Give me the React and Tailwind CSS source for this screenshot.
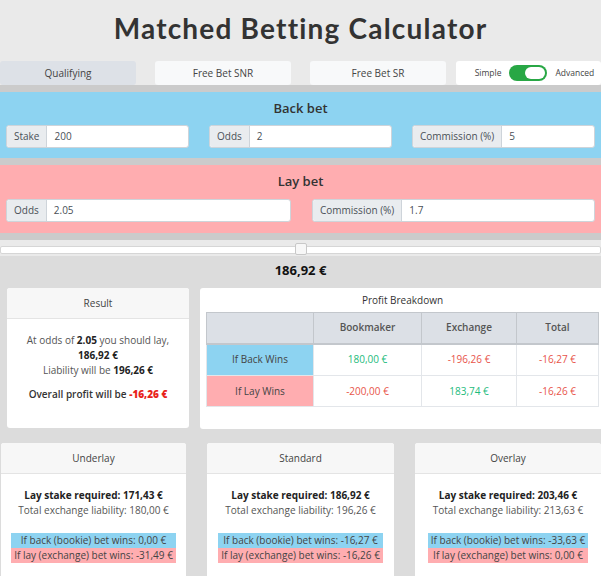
import { useState } from 'react';

const body = { fontFamily: '"Open Sans", "Noto Sans", sans-serif' };

function InputGroup({ label, value, className }) {
  return (
    <div className={`flex h-[23px] rounded-[3px] border border-[#ced4da] bg-white text-[10px] ${className}`}>
      <div className="flex items-center bg-[#e9ecef] px-[7px] text-[#495057] border-r border-[#ced4da] rounded-l-[3px]">{label}</div>
      <div className="flex items-center px-[7px] text-[#495057]">{value}</div>
    </div>
  );
}

function Card({ title, className, children }) {
  return (
    <div className={`bg-white rounded-[3px] flex flex-col ${className}`}>
      <div className="h-[31px] flex items-center justify-center bg-[#f7f7f7] border-b border-[#e4e4e4] rounded-t-[3px] text-[10px] text-[#444]">{title}</div>
      {children}
    </div>
  );
}

function Scenario({ title, stake, liability, back, lay, className }) {
  return (
    <Card title={title} className={`h-[140px] ${className}`}>
      <div className="flex flex-col items-center pt-[14px] text-[10px]">
        <div className="font-bold text-[#222] leading-[15px]">Lay stake required: {stake}</div>
        <div className="text-[#555] leading-[15px]">Total exchange liability: {liability}</div>
        <div className="mt-[15px] flex flex-col items-stretch text-[#444]">
          <div className="bg-[#8dd3f1] px-[3px] leading-[15px] text-center">If back (bookie) bet wins: {back}</div>
          <div className="bg-[#ffadb0] px-[3px] leading-[15px] text-center">If lay (exchange) bet wins: {lay}</div>
        </div>
      </div>
    </Card>
  );
}

export default function App() {
  const [advanced, setAdvanced] = useState(true);
  const green = 'text-[#1dbb7c]';
  const red = 'text-[#e8544a]';

  return (
    <div className="w-[601px] h-[576px] overflow-hidden bg-[#dcdcdc]" style={body}>
      {/* Header */}
      <div className="bg-[#eaeaea] h-[61px] flex items-center justify-center">
        <h1 className="text-[28px] font-bold text-[#333] tracking-[1.2px] mt-[-6px]" style={{ fontFamily: 'Lato, "Open Sans", sans-serif' }}>
          Matched Betting Calculator
        </h1>
      </div>

      {/* Tabs */}
      <div className="bg-[#eaeaea] h-[24px] flex text-[10px] text-[#444]">
        <div className="w-[136px] bg-[#dde1e7] rounded-[3px] flex items-center justify-center">Qualifying</div>
        <div className="w-[136px] ml-[19px] bg-[#f8f9fa] rounded-[3px] flex items-center justify-center">Free Bet SNR</div>
        <div className="w-[136px] ml-[19px] bg-[#f8f9fa] rounded-[3px] flex items-center justify-center">Free Bet SR</div>
        <div className="flex-1 ml-[10px] pl-[12px] bg-white rounded-[3px] flex items-center justify-center gap-[8px] text-[8.5px]">
          <span>Simple</span>
          <button
            onClick={() => setAdvanced(!advanced)}
            className={`w-[38px] h-[16px] rounded-full flex items-center px-[2px] ${advanced ? 'bg-[#28a745] justify-end' : 'bg-[#ccc] justify-start'}`}
          >
            <span className="w-[20px] h-[12px] rounded-full bg-white" />
          </button>
          <span>Advanced</span>
        </div>
      </div>

      <div className="h-[7px] bg-[#cbcbcb]" />

      {/* Back bet */}
      <div className="bg-[#8dd3f1] h-[66px] px-[6px]">
        <div className="h-[33px] flex items-center justify-center text-[13px] font-semibold text-[#333]">Back bet</div>
        <div className="flex justify-between">
          <InputGroup label="Stake" value="200" className="w-[183px]" />
          <InputGroup label="Odds" value="2" className="w-[183px]" />
          <InputGroup label="Commission (%)" value="5" className="w-[183px]" />
        </div>
      </div>

      <div className="h-[7px] bg-[#cbcbcb]" />

      {/* Lay bet */}
      <div className="bg-[#ffadb0] h-[68px] px-[6px]">
        <div className="h-[34px] flex items-center justify-center text-[13px] font-semibold text-[#333]">Lay bet</div>
        <div className="flex justify-between">
          <InputGroup label="Odds" value="2.05" className="w-[285px]" />
          <InputGroup label="Commission (%)" value="1.7" className="w-[283px]" />
        </div>
      </div>

      <div className="h-[7px] bg-[#cbcbcb]" />

      {/* Slider */}
      <div className="bg-[#eaeaea] h-[16px] relative">
        <div className="absolute left-0 right-0 top-[6px] h-[8px] bg-white border border-[#d6d6d6] rounded-[2px]" />
        <div className="absolute left-[295px] top-[3px] w-[12px] h-[12px] bg-[#f7f7f7] border border-[#c8c8c8] rounded-[2px]" />
      </div>

      <div className="h-[30px] flex items-center justify-center text-[13px] font-bold text-[#111]">186,92 €</div>

      {/* Result + breakdown */}
      <div className="flex pl-[7px] mt-[2px]">
        <Card title="Result" className="w-[182px] h-[140px]">
          <div className="flex flex-col items-center pt-[14px] text-[10px] text-[#555] leading-[15px]">
            <div>At odds of <b className="text-[#222]">2.05</b> you should lay,</div>
            <div className="font-bold text-[#222]">186,92 €</div>
            <div>Liability will be <b className="text-[#222]">196,26 €</b></div>
            <div className="mt-[9px] font-semibold text-[#333]">Overall profit will be <b className="text-[#e8231b]">-16,26 €</b></div>
          </div>
        </Card>
        <div className="ml-[11px] flex-1 h-[141px] bg-white rounded-l-[3px] pl-[6px] pr-[2px]">
          <div className="h-[24px] flex items-center justify-center text-[10px] text-[#333]">Profit Breakdown</div>
          <table className="w-full border-collapse text-[10px] text-center">
            <thead>
              <tr className="h-[31px] bg-[#dce0e6] text-[#555]">
                <th className="w-[107px] border border-[#c3c7cc] border-b-2"></th>
                <th className="w-[108px] border border-[#c3c7cc] border-b-2 font-semibold">Bookmaker</th>
                <th className="w-[95px] border border-[#c3c7cc] border-b-2 font-semibold">Exchange</th>
                <th className="border border-[#c3c7cc] border-b-2 font-semibold">Total</th>
              </tr>
            </thead>
            <tbody>
              <tr className="h-[32px]">
                <td className="bg-[#8dd3f1] text-[#444] border border-[#e3e6ea]">If Back Wins</td>
                <td className={`${green} border border-[#e3e6ea]`}>180,00 €</td>
                <td className={`${red} border border-[#e3e6ea]`}>-196,26 €</td>
                <td className={`${red} border border-[#e3e6ea]`}>-16,27 €</td>
              </tr>
              <tr className="h-[31px]">
                <td className="bg-[#ffadb0] text-[#444] border border-[#e3e6ea]">If Lay Wins</td>
                <td className={`${red} border border-[#e3e6ea]`}>-200,00 €</td>
                <td className={`${green} border border-[#e3e6ea]`}>183,74 €</td>
                <td className={`${red} border border-[#e3e6ea]`}>-16,26 €</td>
              </tr>
            </tbody>
          </table>
        </div>
      </div>

      {/* Scenarios */}
      <div className="flex pl-[1px] mt-[14px]">
        <Scenario title="Underlay" stake="171,43 €" liability="180,00 €" back="0,00 €" lay="-31,49 €" className="w-[185px]" />
        <Scenario title="Standard" stake="186,92 €" liability="196,26 €" back="-16,27 €" lay="-16,26 €" className="w-[187px] ml-[21px]" />
        <Scenario title="Overlay" stake="203,46 €" liability="213,63 €" back="-33,63 €" lay="0,00 €" className="flex-1 ml-[21px]" />
      </div>
    </div>
  );
}
